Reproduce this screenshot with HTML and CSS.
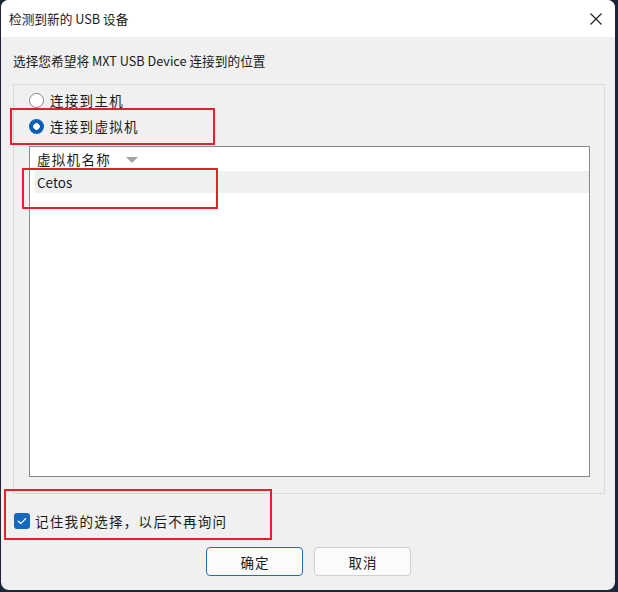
FILE: index.html
```html
<!DOCTYPE html>
<html lang="zh-CN">
<head>
<meta charset="utf-8">
<title>检测到新的 USB 设备</title>
<link rel="stylesheet" href="styles.css">
</head>
<body>
<div class="window">
  <div class="titlebar">
    <span class="title">检测到新的 USB 设备</span>
    <svg class="close" width="14" height="14" viewBox="0 0 14 14"><path d="M1.5 1.5 L12.5 12.5 M12.5 1.5 L1.5 12.5" stroke="#1a1a1a" stroke-width="1.1" fill="none"/></svg>
  </div>
  <div class="content">
    <div class="prompt">选择您希望将 MXT USB Device 连接到的位置</div>
    <div class="group">
      <label class="radio-row"><span class="radio"></span><span class="wide">连接到主机</span></label>
      <label class="radio-row"><span class="radio checked"></span><span class="wide">连接到虚拟机</span></label>
      <div class="list">
        <div class="list-header"><span class="wide">虚拟机名称</span><span class="sort"></span></div>
        <div class="list-row">Cetos</div>
      </div>
    </div>
    <label class="check-row">
      <span class="checkbox"><svg width="16" height="16" viewBox="0 0 16 16"><path d="M4.3 8.3 L6.8 10.6 L11.6 5.6" stroke="#fff" stroke-width="1.3" fill="none" stroke-linecap="round" stroke-linejoin="round"/></svg></span>
      <span class="wide">记住我的选择，以后不再询问</span>
    </label>
    <div class="buttons">
      <button class="btn primary">确定</button>
      <button class="btn">取消</button>
    </div>
  </div>
  <div class="mark mark-1"></div>
  <div class="mark mark-2"></div>
  <div class="mark mark-3"></div>
</div>
</body>
</html>
```
FILE: styles.css
```css
html, body {
  margin: 0;
  padding: 0;
}
body {
  background: #1c2636;
  width: 618px;
  height: 592px;
  overflow: hidden;
  font-family: "Noto Sans CJK SC", "Noto Sans", sans-serif;
  font-size: 13.5px;
  color: #1a1a1a;
}
.window {
  position: relative;
  width: 614px;
  height: 590px;
  margin-left: 1px;
  background: #f0f0f0;
  border-radius: 8px;
  overflow: hidden;
  display: flex;
  flex-direction: column;
}
.titlebar {
  height: 37px;
  flex: none;
  background: #ffffff;
  display: flex;
  align-items: center;
  justify-content: space-between;
  padding: 0 12px 0 8px;
}
.title {
  font-size: 12.7px;
  line-height: 20px;
}
.close {
  display: block;
  margin-top: 1px;
}
.content {
  flex: 1;
  display: flex;
  flex-direction: column;
  padding: 0 10px 0 12px;
}
.prompt {
  font-size: 12.7px;
  padding-top: 14px;
  line-height: 20px;
  margin-bottom: 13px;
}
.wide {
  letter-spacing: 1.3px;
}
.group {
  height: 403px;
  border: 1px solid #dadada;
  padding: 5px 14px 0 15px;
  display: flex;
  flex-direction: column;
}
.radio-row {
  display: flex;
  align-items: center;
  gap: 6px;
  height: 20px;
  line-height: 20px;
}
.radio-row + .radio-row {
  margin-top: 6px;
}
.radio {
  width: 13px;
  height: 13px;
  border-radius: 50%;
  border: 1px solid #858585;
  background: #ffffff;
  flex: none;
}
.radio.checked {
  width: 15px;
  height: 15px;
  border: none;
  background: radial-gradient(circle, #ffffff 0 3px, #0a5fb4 3.6px);
}
.list {
  margin-top: 10px;
  height: 329px;
  border: 1px solid #868a91;
  background: #ffffff;
}
.list-header {
  height: 24px;
  margin-right: 2px;
  display: flex;
  align-items: center;
  gap: 15px;
  padding-left: 7px;
  background: #ffffff;
}
.sort {
  width: 0;
  height: 0;
  border-left: 6px solid transparent;
  border-right: 6px solid transparent;
  border-top: 6px solid #a4a4a4;
  margin-top: 1px;
}
.list-row {
  height: 22px;
  line-height: 22px;
  margin-left: 5px;
  padding-left: 2px;
  background: #f0f0f0;
}
.check-row {
  display: flex;
  align-items: center;
  gap: 5px;
  margin-top: 17px;
  margin-left: 1px;
  height: 20px;
}
.checkbox {
  width: 16px;
  height: 16px;
  border-radius: 3px;
  background: #1668bd;
  flex: none;
}
.checkbox svg {
  display: block;
}
.buttons {
  display: flex;
  justify-content: center;
  gap: 11px;
  margin-top: 16px;
  padding-right: 1px;
}
.btn {
  width: 97px;
  height: 29px;
  border-radius: 4px;
  border: 1px solid #cfcfcf;
  background: #fbfbfb;
  font-family: "Noto Sans CJK SC", "Noto Sans", sans-serif;
  font-size: 13.5px;
  letter-spacing: 1px;
  text-indent: 1px;
  color: #1a1a1a;
  padding: 0;
}
.btn.primary {
  border-color: #1a6fc4;
}
.mark {
  position: absolute;
  border: 2px solid #e5202b;
  box-sizing: border-box;
}
.mark-1 { left: 9px; top: 108px; width: 205px; height: 37px; }
.mark-2 { left: 21px; top: 168px; width: 196px; height: 41px; }
.mark-3 { left: 3px; top: 489px; width: 268px; height: 51px; }
```
